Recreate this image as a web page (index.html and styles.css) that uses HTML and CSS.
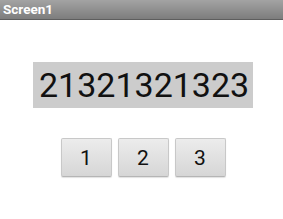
FILE: index.html
```html
<!DOCTYPE html>
<html lang="en">

<head>
    <meta charset="UTF-8">
    <meta name="viewport" content="width=device-width, initial-scale=1.0">
    <title>Screen1</title>

    <link rel="stylesheet" href="styles.css">
</head>

<body>
    <!-- app title bar -->
    <div class="title-bar">Screen1</div>

    <div class="screen">
        <div class="display">21321321323</div>

        <div class="buttons">
            <input type="button" value="1" class="num-button">
            <input type="button" value="2" class="num-button">
            <input type="button" value="3" class="num-button">
        </div>
    </div>
</body>

</html>
```

FILE: styles.css
```css
* {
    user-select: none;
}

body, html {
    height: 100%;
    margin: 0;
    background: #fff;
    font-family: Roboto, "Liberation Sans", sans-serif;
}

/* grey bar across the top with the screen name */
.title-bar {
    height: 19px;
    line-height: 19px;
    padding-left: 3px;
    color: #fff;
    font-size: 13.5px;
    font-weight: bold;
    background: linear-gradient(#a3a3a3, #7d7d7d);
    border-bottom: 1px solid #5e5e5e;
}

.screen {
    display: flex;
    flex-direction: column;
    align-items: center;
    padding-top: 42px;
}

/* the big label holding the pressed digits */
.display {
    margin-left: 3px;
    padding: 3px 3px 3px 6px;
    width: 211px;
    line-height: 40px;
    font-size: 34px;
    color: #111;
    background: #cccccc;
}

.buttons {
    display: flex;
    gap: 6px;
    margin-top: 30px;
    margin-left: 3px;
}

.num-button {
    width: 51px;
    height: 39px;
    padding: 0;
    font-family: inherit;
    font-size: 21px;
    color: #111;
    border: 1px solid #c8c8c8;
    border-bottom-color: #b5b5b5;
    border-radius: 2px;
    background: linear-gradient(#ececec, #d6d6d6);
    box-shadow: 0 1px 1px rgba(0,0,0,.12);
}
```
